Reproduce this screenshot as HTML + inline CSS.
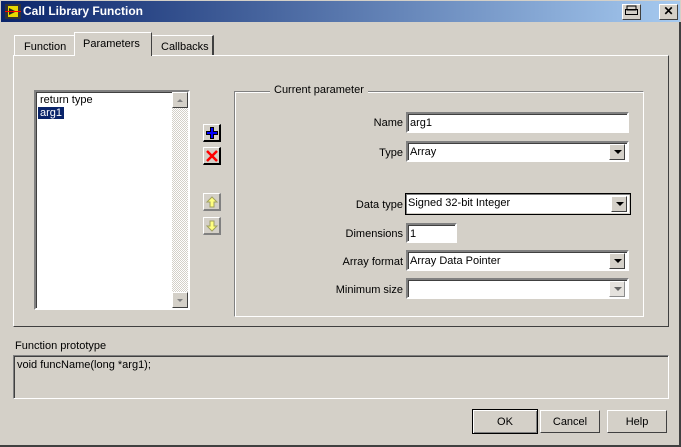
<!DOCTYPE html>
<html><head><style>
*{box-sizing:border-box;margin:0;padding:0}
body{width:681px;height:447px;background:#d4d0c8;font-family:"Liberation Sans",sans-serif;font-size:11px;color:#000;position:relative;overflow:hidden}
.a{position:absolute}
.title{left:0;top:0;width:681px;height:22px;background:linear-gradient(90deg,#0a246a,#a6caf0);border:1px solid #d4d0c8;border-bottom:none}
.title span{position:absolute;left:22px;top:3px;color:#fff;font-weight:bold;font-size:12px}
.tb{width:19px;height:16px;top:3px;background:#d4d0c8;border:1px solid;border-color:#fff #404040 #404040 #fff;text-align:center;font-weight:bold;font-size:12px;line-height:13px}
.out{border:1px solid;border-color:#fff #404040 #404040 #fff}
.inp{background:#fff;border:2px solid;border-color:#808080 #fff #fff #808080;box-shadow:inset 1px 1px 0 #404040;padding:3px 0 0 2px;white-space:nowrap}
.dd{position:absolute;right:2px;top:1px;width:16px;height:16px;background:#d4d0c8;border:1px solid;border-color:#fff #404040 #404040 #fff}
.dd:after{content:"";position:absolute;left:4px;top:5px;border:4px solid transparent;border-top:4px solid #000;border-bottom:0}
.lbl{text-align:right;width:120px}
.btn{background:#d4d0c8;border:1px solid;border-color:#fff #404040 #404040 #fff;text-align:center;line-height:24px}
.sb{width:18px;height:18px;background:#d4d0c8;border:1px solid;border-color:#fff #404040 #404040 #fff}
</style></head><body>
<div class="a title"><svg class="a" style="left:4px;top:3px" width="16" height="15"><rect x="0" y="0" width="16" height="15" fill="#333"/><rect x="3" y="2" width="10" height="11" fill="#e8d800"/><path d="M4 4 L11 7.5 L4 11Z" fill="#222"/><line x1="0" y1="7.5" x2="16" y2="7.5" stroke="#f00"/></svg><span>Call Library Function</span>
<div class="a tb" style="left:621px"><svg width="13" height="11"><rect x="2" y="1" width="9" height="4" fill="none" stroke="#000"/><rect x="0.5" y="4.5" width="12" height="5" fill="none" stroke="#000"/></svg></div>
<div class="a tb" style="left:658px">✕</div></div>
<div class="a out" style="left:13px;top:55px;width:656px;height:272px"></div>
<div class="a" style="left:14px;top:35px;width:61px;height:20px;border:1px solid;border-color:#fff #404040 transparent #fff;border-bottom:none;padding:5px 0 0 9px">Function</div>
<div class="a" style="left:74px;top:32px;width:78px;height:24px;border:1px solid;border-color:#fff #404040 transparent #fff;border-bottom:none;background:#d4d0c8;padding:5px 0 0 8px">Parameters</div>
<div class="a" style="left:152px;top:35px;width:62px;height:20px;border:1px solid;border-color:#fff #404040 transparent transparent;border-bottom:none;border-right-width:2px;padding:5px 0 0 8px">Callbacks</div>
<div class="a" style="left:34px;top:90px;width:156px;height:220px;background:#fff;border:2px solid;border-color:#808080 #fff #fff #808080;box-shadow:inset 1px 1px 0 #404040"></div>
<div class="a" style="left:40px;top:94px">return type</div>
<div class="a" style="left:38px;top:107px;background:#0a246a;color:#fff;padding:0 2px">arg1</div>
<div class="a" style="left:172px;top:92px;width:16px;height:216px;background:repeating-conic-gradient(#fff 0 25%,#d4d0c8 0 50%) 0 0/2px 2px"></div>
<div class="a sb" style="left:172px;top:92px;width:16px;height:16px"><svg width="14" height="14"><path d="M4 9h6L7 6z" fill="#808080"/></svg></div>
<div class="a sb" style="left:172px;top:292px;width:16px;height:16px"><svg width="14" height="14"><path d="M4 6h6L7 9z" fill="#808080"/></svg></div>
<div class="a sb" style="left:203px;top:124px;border-color:#fff #000 #000 #fff;border-width:1px 2px 2px 1px"><svg width="16" height="16"><path d="M8 2v12M2 8h12" stroke="#000" stroke-width="4"/><path d="M8 3v10M3 8h10" stroke="#00f" stroke-width="2"/></svg></div>
<div class="a sb" style="left:203px;top:147px;border-color:#fff #000 #000 #fff;border-width:1px 2px 2px 1px"><svg width="16" height="16"><path d="M3 3L13 13M13 3L3 13" stroke="#f00" stroke-width="2.5"/></svg></div>
<div class="a sb" style="left:203px;top:193px;border-color:#fff #808080 #808080 #fff;border-width:1px 2px 2px 1px"><svg width="16" height="16"><path d="M8 3L3 8h3v5h4V8h3z" fill="#ffff80" stroke="#a0a060"/></svg></div>
<div class="a sb" style="left:203px;top:217px;border-color:#fff #808080 #808080 #fff;border-width:1px 2px 2px 1px"><svg width="16" height="16"><path d="M8 13L3 8h3V3h4v5h3z" fill="#ffff80" stroke="#a0a060"/></svg></div>
<div class="a" style="left:234px;top:91px;width:410px;height:226px;border:1px solid;border-color:#808080 #fff #fff #808080;box-shadow:inset 1px 1px 0 #fff,1px 1px 0 #808080 inset"></div>
<div class="a" style="left:270px;top:84px;background:#d4d0c8;padding:0 4px">Current parameter</div>
<div class="a lbl" style="left:283px;top:117px">Name</div>
<div class="a inp" style="left:406px;top:112px;width:223px;height:21px">arg1</div>
<div class="a lbl" style="left:283px;top:147px">Type</div>
<div class="a inp" style="left:406px;top:141px;width:223px;height:21px">Array<div class="dd"></div></div>
<div class="a lbl" style="left:283px;top:199px">Data type</div>
<div class="a inp" style="left:405px;top:193px;width:226px;height:22px;border:1px solid #000;box-shadow:inset 1px 1px 0 #808080,inset -1px -1px 0 #d4d0c8">Signed 32-bit Integer<div class="dd" style="right:3px;top:2px"></div></div>
<div class="a lbl" style="left:283px;top:228px">Dimensions</div>
<div class="a inp" style="left:406px;top:223px;width:51px;height:20px">1</div>
<div class="a lbl" style="left:283px;top:256px">Array format</div>
<div class="a inp" style="left:406px;top:250px;width:223px;height:21px">Array Data Pointer<div class="dd"></div></div>
<div class="a lbl" style="left:283px;top:284px">Minimum size</div>
<div class="a inp" style="left:406px;top:278px;width:223px;height:21px"><div class="dd" style="opacity:.6"></div></div>
<div class="a" style="left:15px;top:340px">Function prototype</div>
<div class="a" style="left:13px;top:355px;width:656px;height:44px;border:1px solid;border-color:#808080 #fff #fff #808080;box-shadow:inset 1px 1px 0 #404040;padding:3px 0 0 3px">void funcName(long *arg1);</div>
<div class="a btn" style="left:472px;top:409px;width:66px;height:25px;border:1px solid #000;box-shadow:inset 1px 1px 0 #fff,inset -1px -1px 0 #808080">OK</div>
<div class="a btn" style="left:540px;top:410px;width:60px;height:23px;line-height:22px">Cancel</div>
<div class="a btn" style="left:607px;top:410px;width:60px;height:23px;line-height:22px">Help</div>
<div class="a" style="left:679px;top:22px;width:2px;height:425px;background:#404040"></div>
<div class="a" style="left:0;top:445px;width:681px;height:2px;background:#404040"></div>
</body></html>
